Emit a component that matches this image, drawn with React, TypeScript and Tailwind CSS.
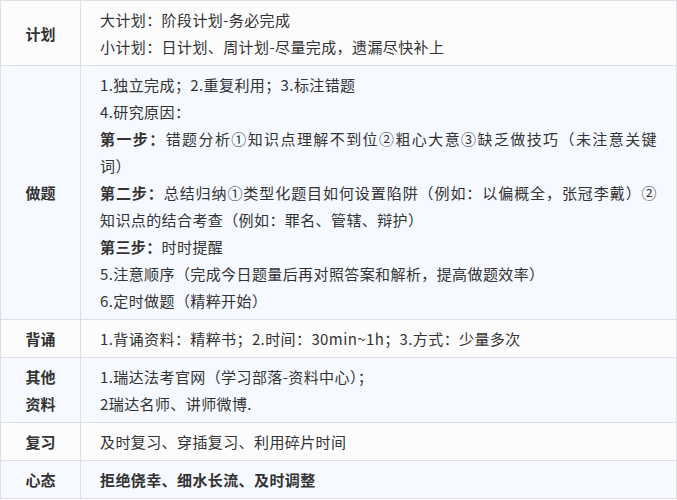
import React from 'react';

type Row = { label: React.ReactNode; content: React.ReactNode; alt?: boolean };

// first line of a wrapped paragraph, stretched edge to edge like the reference
const Full = ({ children }: { children: React.ReactNode }) => (
  <p className="text-justify [text-align-last:justify] whitespace-nowrap">{children}</p>
);

const rows: Row[] = [
  {
    label: '计划',
    content: (
      <>
        <p>大计划：阶段计划-务必完成</p>
        <p>小计划：日计划、周计划-尽量完成，遗漏尽快补上</p>
      </>
    ),
  },
  {
    label: '做题',
    alt: true,
    content: (
      <>
        <p>1.独立完成；2.重复利用；3.标注错题</p>
        <p>4.研究原因：</p>
        <Full>
          <strong>第一步：</strong>错题分析①知识点理解不到位②粗心大意③缺乏做技巧（未注意关键
        </Full>
        <p>词）</p>
        <Full>
          <strong>第二步：</strong>总结归纳①类型化题目如何设置陷阱（例如：以偏概全，张冠李戴）②
        </Full>
        <p>知识点的结合考查（例如：罪名、管辖、辩护）</p>
        <p>
          <strong>第三步：</strong>时时提醒
        </p>
        <p>5.注意顺序（完成今日题量后再对照答案和解析，提高做题效率）</p>
        <p>6.定时做题（精粹开始）</p>
      </>
    ),
  },
  {
    label: '背诵',
    content: <p>1.背诵资料：精粹书；2.时间：30min~1h；3.方式：少量多次</p>,
  },
  {
    label: (
      <>
        其他
        <br />
        资料
      </>
    ),
    alt: true,
    content: (
      <>
        <p>1.瑞达法考官网（学习部落-资料中心）；</p>
        <p>2瑞达名师、讲师微博.</p>
      </>
    ),
  },
  {
    label: '复习',
    content: <p>及时复习、穿插复习、利用碎片时间</p>,
  },
  {
    label: '心态',
    alt: true,
    content: <p className="font-bold">拒绝侥幸、细水长流、及时调整</p>,
  },
];

export default function App() {
  return (
    <div className="w-[677px] h-[500px] bg-white font-['Noto_Sans_CJK_SC',sans-serif] text-[15px] leading-[27px] text-[#333]">
      <table className="w-[677px] border-collapse table-fixed">
        <colgroup>
          <col className="w-[80px]" />
          <col />
        </colgroup>
        <tbody>
          {rows.map((row, i) => (
            <tr key={i} className={row.alt ? 'bg-[#f6f9ff]' : 'bg-[#fcfcfd]'}>
              <td className="border border-[#dddfe3] px-2 py-[5px] text-center font-bold align-middle">
                {row.label}
              </td>
              <td className="border border-[#dddfe3] pl-[19px] pr-[19px] py-[5px] align-middle tracking-[0.4px]">
                {row.content}
              </td>
            </tr>
          ))}
        </tbody>
      </table>
    </div>
  );
}
